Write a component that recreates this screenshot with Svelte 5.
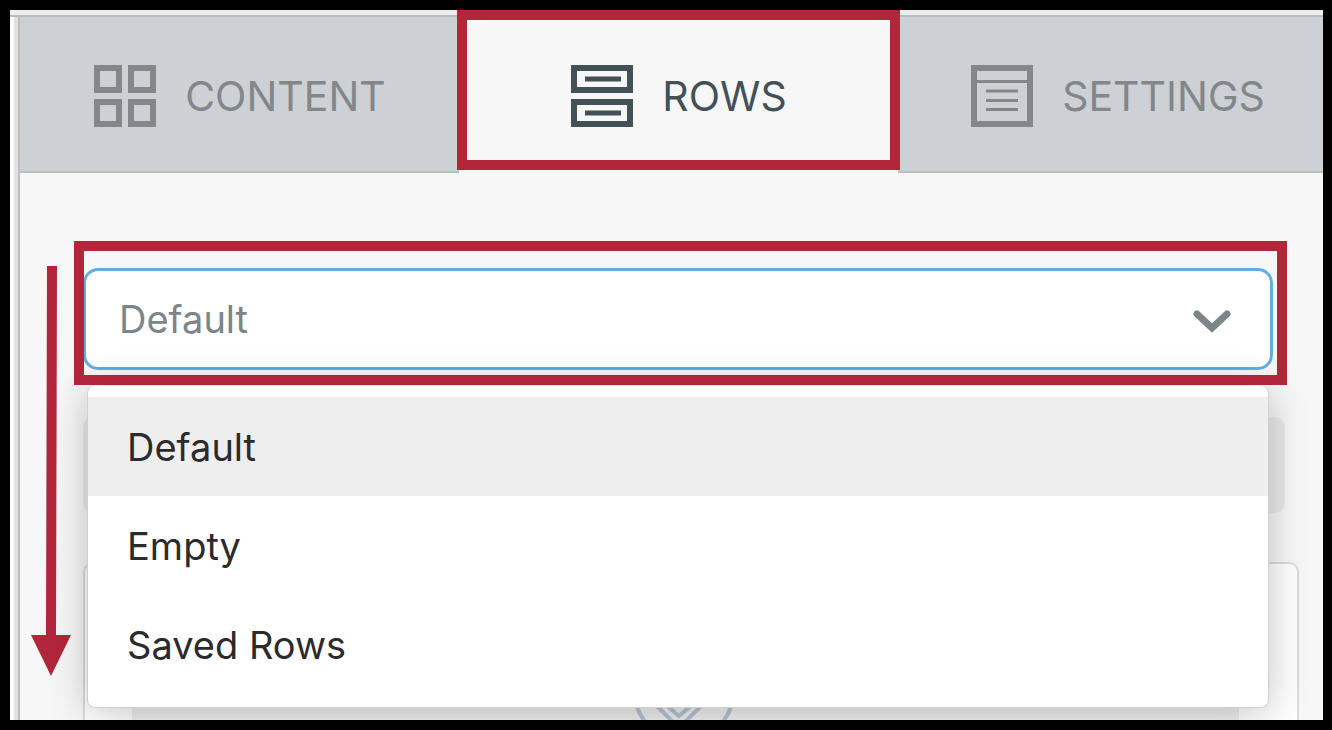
<script lang="ts">
    const tabs = [
        { id: "content", label: "CONTENT" },
        { id: "rows", label: "ROWS" },
        { id: "settings", label: "SETTINGS" },
    ];
    const options = ["Default", "Empty", "Saved Rows"];

    let activeTab = "rows";
    let selected = "Default";

    function choose(option: string) {
        selected = option;
    }
</script>

<div class="frame">
    <div class="top-strip"></div>
    <div class="workspace">
        <div class="gutter"></div>
        <main class="panel">
            <nav class="tabs">
                {#each tabs as tab}
                    <button
                        class="tab"
                        class:active={activeTab === tab.id}
                        on:click={() => (activeTab = tab.id)}
                    >
                        <svg class="tab-icon" viewBox="0 0 64 64" aria-hidden="true">
                            {#if tab.id === "content"}
                                <g fill="none" stroke="currentColor" stroke-width="6">
                                    <rect x="4" y="4" width="22" height="22" />
                                    <rect x="38" y="4" width="22" height="22" />
                                    <rect x="4" y="38" width="22" height="22" />
                                    <rect x="38" y="38" width="22" height="22" />
                                </g>
                            {:else if tab.id === "rows"}
                                <g fill="none" stroke="currentColor" stroke-width="6">
                                    <rect x="4" y="4" width="56" height="22" />
                                    <rect x="4" y="38" width="56" height="22" />
                                </g>
                                <path d="M15 15h36M15 49h36" stroke="currentColor" stroke-width="5" />
                            {:else}
                                <rect x="4" y="4" width="56" height="56" fill="none" stroke="currentColor" stroke-width="6" />
                                <path
                                    d="M5 17.500h54M16 27h32M16 36.500h32M16 45.500h32"
                                    fill="none"
                                    stroke="currentColor"
                                    stroke-width="3"
                                />
                            {/if}
                        </svg>
                        <span>{tab.label}</span>
                    </button>
                {/each}
            </nav>

            <section class="body">
                <svg class="arrow" viewBox="0 0 40 410" aria-hidden="true">
                    <path d="M16 0H26L25 369H40L20 410L0 369H15Z" fill="#b22639" />
                </svg>

                <div class="field">
                    <select class="select" aria-label="Row type" bind:value={selected}>
                        {#each options as option}
                            <option>{option}</option>
                        {/each}
                    </select>
                    <svg class="chevron" viewBox="0 0 40 24" aria-hidden="true">
                        <path
                            d="M5 5L20 19L35 5"
                            fill="none"
                            stroke="#7c8588"
                            stroke-width="7"
                            stroke-linecap="round"
                        />
                    </svg>
                    <div class="menu">
                        {#each options as option}
                            <button
                                class="item"
                                class:current={selected === option}
                                on:click={() => choose(option)}
                            >
                                {option}
                            </button>
                        {/each}
                    </div>
                    <div class="highlight"></div>
                </div>

                <div class="bar"></div>

                <div class="card">
                    <div class="drop-zone">
                        <svg class="drop-icon" viewBox="0 0 104 104" aria-hidden="true">
                            <g fill="none" stroke="#b4c3d4" stroke-width="4">
                                <circle cx="50" cy="50" r="49" />
                                <path d="M21 62L45 86L71 60M31 62L45 74L59 62" />
                            </g>
                        </svg>
                    </div>
                </div>
            </section>
        </main>
    </div>
</div>

<style>
    :global(body) {
        margin: 0;
    }

    .frame {
        box-sizing: border-box;
        display: flex;
        flex-direction: column;
        height: 100vh;
        border: 10px solid #000;
        border-right-width: 9px;
        overflow: hidden;
        background: #fff;
        font-family: Inter, "Liberation Sans", sans-serif;
    }

    .top-strip {
        flex: none;
        height: 5px;
        background: #ededed;
        border-bottom: 2px solid #b9bcbf;
    }

    .workspace {
        display: flex;
        flex: 1;
        min-height: 0;
    }

    .gutter {
        flex: none;
        width: 4px;
        margin-left: 4px;
        background: #e1e1e1;
        border-right: 2px solid #bfbfbf;
    }

    /* the panel runs on a little past the right edge of the frame */
    .panel {
        display: flex;
        flex-direction: column;
        flex: 1;
        min-width: 0;
        margin-right: -14px;
        background: #f7f7f7;
    }

    .tabs {
        display: grid;
        grid-template-columns: repeat(3, 1fr);
        flex: none;
    }

    .tab {
        position: relative;
        display: flex;
        align-items: center;
        justify-content: center;
        gap: 28px;
        height: 156px;
        padding: 3px 0 0;
        border: none;
        border-bottom: 2px solid #bfbfbf;
        background: #cdd0d5;
        color: #838789;
        font-family: inherit;
        font-size: 41px;
        line-height: 48px;
        cursor: pointer;
    }
    .tab.active {
        z-index: 1;
        background: #f7f7f7;
        border-bottom-color: #f7f7f7;
        color: #435157;
    }
    .tab.active::after {
        content: "";
        position: absolute;
        inset: -7px -2px 1px;
        border: 10px solid #b22639;
    }

    .tab-icon {
        width: 64px;
        height: 64px;
    }

    .body {
        position: relative;
        display: flex;
        flex-direction: column;
        flex: 1;
        min-height: 0;
        padding: 95px 38px 0 63px;
    }

    .arrow {
        position: absolute;
        top: 93px;
        left: 11px;
        width: 40px;
        height: 410px;
    }

    .field {
        position: relative;
        z-index: 1;
        margin-right: 26px;
    }

    .select {
        display: block;
        box-sizing: border-box;
        width: 100%;
        height: 102px;
        padding: 0 80px 0 33px;
        border: 3px solid #62aee0;
        border-radius: 15px;
        background: #fff;
        color: #7c8588;
        font-family: inherit;
        font-size: 38px;
        appearance: none;
        outline: none;
    }

    .chevron {
        position: absolute;
        top: 41px;
        right: 41px;
        width: 40px;
        height: 24px;
        pointer-events: none;
    }

    .highlight {
        position: absolute;
        inset: -27px -14px -15px -9px;
        border: 10px solid #b22639;
        pointer-events: none;
    }

    .menu {
        position: absolute;
        top: 118px;
        left: 4px;
        right: 4px;
        padding: 11px 0 13px;
        border: 1px solid #d0d0d0;
        border-top: none;
        border-radius: 8px;
        background: #fff;
        box-shadow: 0 4px 40px rgba(0, 0, 0, 0.24);
    }

    .item {
        display: block;
        width: 100%;
        height: 99px;
        padding: 0 39px;
        border: none;
        background: #fff;
        color: #2b2b2b;
        font-family: inherit;
        font-size: 38px;
        text-align: left;
        cursor: pointer;
    }
    .item.current {
        background: #eee;
    }

    .bar {
        flex: none;
        height: 96px;
        margin: 47px 14px 0 0;
        border-radius: 10px;
        background: #eaeaea;
    }

    .card {
        flex: 1;
        min-height: 0;
        margin-top: 49px;
        padding: 48px 58px 0 47px;
        border: 2px solid #dcdcdc;
        border-bottom: none;
        border-radius: 10px 10px 0 0;
        background: #fff;
    }

    .drop-zone {
        display: flex;
        justify-content: center;
        height: 170px;
        padding-top: 30px;
        background: #efefef;
    }

    .drop-icon {
        width: 104px;
        height: 104px;
    }
</style>
